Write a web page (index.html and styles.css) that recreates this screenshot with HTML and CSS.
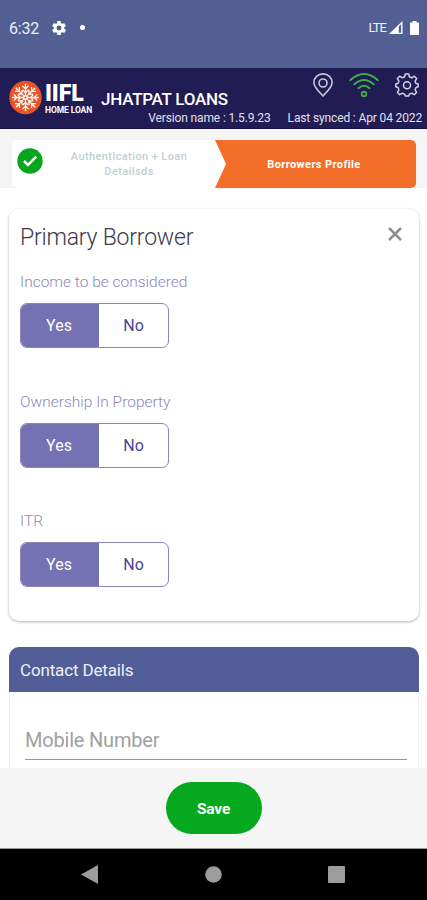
FILE: index.html
```html
<!DOCTYPE html>
<html lang="en">
<head>
<meta charset="utf-8">
<meta name="viewport" content="width=device-width, initial-scale=1">
<title>Jhatpat Loans</title>
<link rel="stylesheet" href="styles.css">
</head>
<body>
<div class="status">
  <span class="clock">6:32</span>
  <svg class="status-gear" width="14" height="16" viewBox="2 2 20 20"><path fill="#fff" d="M19.4 13a7.800 7.800 0 0 0 0-2l2.100-1.600a.5.5 0 0 0 .1-.7l-2-3.400a.5.5 0 0 0-.6-.2l-2.500 1a7.300 7.300 0 0 0-1.700-1l-.4-2.700a.5.5 0 0 0-.5-.4h-4a.5.5 0 0 0-.5.4L9.200 5.100a7.300 7.300 0 0 0-1.700 1L5 5.100a.5.500 0 0 0-.6.2l-2 3.400a.5.500 0 0 0 .1.7L4.600 11a7.800 7.800 0 0 0 0 2l-2.100 1.600a.5.500 0 0 0-.1.700l2 3.400c.1.200.4.300.6.200l2.500-1a7.300 7.300 0 0 0 1.700 1l.4 2.700c0 .2.200.4.500.4h4c.3 0 .5-.2.5-.4l.4-2.700a7.300 7.300 0 0 0 1.700-1l2.500 1c.2.100.5 0 .6-.2l2-3.400a.5.500 0 0 0-.1-.7zM12 15.500a3.500 3.500 0 1 1 0-7 3.500 3.500 0 0 1 0 7z"/></svg>
  <i class="dot"></i>
  <span class="lte">LTE</span>
  <svg class="signal" width="14" height="13" viewBox="0 0 15 14"><path fill="#fff" fill-rule="evenodd" d="M0 14 14.500 0V14zM10.500 5.800V12.600H13V3.500z"/></svg>
  <svg width="9" height="14" viewBox="0 0 9 14"><path fill="#fff" d="M2.500 0h4v1.500H8.200q.8 0 .8.800v10.900q0 .8-.8.800H.8q-.8 0-.8-.8V2.300q0-.8.8-.8h1.700z"/></svg>
</div>

<header class="header">
  <div class="logo">
    <svg width="33" height="35" viewBox="-17 -17.500 34 35">
      <defs><g id="spoke" fill="none" stroke="#fff" stroke-width="1.300"><path d="M0-2V-13M-3.200-12 0-9 3.200-12M-3-8 0-5 3-8"/><circle cx="0" cy="-13.200" r=".9" fill="#fff" stroke="none"/></g></defs>
      <ellipse rx="16.700" ry="17.300" fill="#ea5325"/>
      <use href="#spoke"/><use href="#spoke" transform="rotate(45)"/><use href="#spoke" transform="rotate(90)"/><use href="#spoke" transform="rotate(135)"/><use href="#spoke" transform="rotate(180)"/><use href="#spoke" transform="rotate(225)"/><use href="#spoke" transform="rotate(270)"/><use href="#spoke" transform="rotate(315)"/>
      <circle r="2.600" fill="#fff"/><circle r="1.100" fill="#ea5325"/>
    </svg>
    <div class="wordmark"><b>IIFL</b><span>HOME LOAN</span></div>
  </div>
  <div class="header-main">
    <div class="header-top">
      <h1>JHATPAT LOANS</h1>
      <div class="header-icons">
        <svg width="20" height="24" viewBox="0 0 20 24" fill="none" stroke="#c9c8dc" stroke-width="1.600"><path d="M10 23C7 19.500.9 14.500.9 9.500a9.100 8.600 0 0 1 18.200 0C19.100 14.500 13 19.500 10 23z"/><circle cx="10" cy="10" r="4"/></svg>
        <svg width="30" height="25" viewBox="0 0 30 25" fill="none" stroke="#3fae49" stroke-width="1.900" stroke-linecap="round"><path d="M1.200 7.200Q15-5.200 28.800 7.200M5.300 11.300Q15 2.800 24.700 11.300M9.400 15.300Q15 10.400 20.600 15.300"/><circle cx="15" cy="21" r="2.300"/></svg>
        <svg width="24" height="24" viewBox="0 0 24 24" fill="none" stroke="#d3d2e2" stroke-width="1.500" stroke-linejoin="round"><path d="M10.300.9h3.400l.7 2.900 2.300 1 2.600-1.600 2.300 2.400-1.500 2.500.9 2.300 2.200.6v2.800l-2.200.7-.9 2.300 1.500 2.500-2.300 2.400-2.600-1.500-2.300.9-.7 2h-3.400l-.7-2-2.300-.9-2.600 1.500-2.300-2.400 1.500-2.500-.9-2.300-2.200-.7V11l2.200-.6.900-2.300-1.500-2.500 2.300-2.400 2.600 1.600 2.300-1z"/><circle cx="12" cy="12.200" r="3.500"/></svg>
      </div>
    </div>
    <div class="meta"><span class="version">Version name : 1.5.9.23</span><span class="synced">Last synced : Apr 04 2022</span></div>
  </div>
</header>

<nav class="steps">
  <div class="steps-bar">
    <div class="step done">
      <svg width="26" height="26" viewBox="0 0 26 26"><circle cx="13" cy="13" r="12.700" fill="#06a51d"/><path d="m7 13 4 4 8.200-8.300" fill="none" stroke="#fff" stroke-width="2.500"/></svg>
      <span>Authentication + Loan<br>Detailsds</span>
    </div>
    <div class="step current"><span>Borrowers Profile</span></div>
  </div>
</nav>

<main class="content">
  <section class="card">
    <div class="card-head">
      <h2>Primary Borrower</h2>
      <svg width="14" height="14" viewBox="0 0 14 14"><path d="m1 1 12 12M13 1 1 13" stroke="#8e8e8e" stroke-width="2.500"/></svg>
    </div>
    <div class="field"><label>Income to be considered</label><div class="toggle"><span class="on">Yes</span><span>No</span></div></div>
    <div class="field"><label>Ownership In Property</label><div class="toggle"><span class="on">Yes</span><span>No</span></div></div>
    <div class="field"><label>ITR</label><div class="toggle"><span class="on">Yes</span><span>No</span></div></div>
  </section>
  <section class="contact">
    <h3>Contact Details</h3>
    <div class="input">Mobile Number</div>
  </section>
</main>

<footer class="actions"><button class="save">Save</button></footer>
<div class="android">
  <svg width="17" height="19" viewBox="0 0 17 19"><path d="M0 9.500 17 0v19z" fill="#9c9c9c"/></svg>
  <svg width="17" height="17" viewBox="0 0 17 17"><circle cx="8.500" cy="8.500" r="8.300" fill="#9c9c9c"/></svg>
  <svg width="17" height="17" viewBox="0 0 17 17"><rect width="17" height="17" rx="1" fill="#9c9c9c"/></svg>
</div>
</body>
</html>
```
FILE: styles.css
```css
* { box-sizing: border-box; }
body {
  margin: 0;
  height: 900px;
  overflow: hidden;
  display: flex;
  flex-direction: column;
  background: #fff;
  font-family: Roboto, "Liberation Sans", sans-serif;
}
svg { display: block; flex: none; }
h1, h2, h3 { margin: 0; }

.status {
  flex: none;
  height: 68px;
  padding: 0 8px 13px 9px;
  display: flex;
  align-items: center;
  background: #515f93;
  color: #eef0f7;
}
.clock { font-size: 16px; width: 43px; letter-spacing: -.2px; padding-top: 1px; }
.dot { width: 5px; height: 5px; border-radius: 50%; background: #fff; margin-left: 14px; }
.lte { margin-left: auto; font-size: 13px; letter-spacing: -1px; }
.signal { margin: 0 7px 0 3px; }

.header {
  flex: none;
  height: 61px;
  display: flex;
  padding-left: 9px;
  background: #221c54;
  border-bottom: 1px solid #17124a;
  color: #fff;
}
.logo { display: flex; width: 92px; padding-top: 12px; }
.wordmark { width: 50px; margin-left: 3px; }
.wordmark b { display: block; padding-top: 3px; font-size: 23px; font-weight: 900; line-height: 22px; letter-spacing: -.1px; }
.wordmark span { display: block; font-size: 8.500px; font-weight: 700; line-height: 11px; letter-spacing: -.1px; white-space: nowrap; }
.header-main { flex: 1; padding-right: 5px; }
.header-top { display: flex; height: 43px; justify-content: space-between; }
.header h1 { font-size: 17px; font-weight: 500; line-height: 20px; margin-top: 21px; letter-spacing: -.25px; white-space: nowrap; }
.header-icons { display: flex; gap: 16px; padding-top: 5px; margin-right: 3px; }
.meta { display: flex; justify-content: flex-end; gap: 17px; font-size: 12px; line-height: 15px; letter-spacing: -.14px; color: #e1e0ec; white-space: nowrap; }

.steps { flex: none; height: 59px; padding: 11px 11px 0 12px; background: #f5f5f5; }
.steps-bar { display: flex; height: 48px; background: #fff; border-radius: 5px; overflow: hidden; }
.step { display: flex; align-items: center; font-size: 11px; line-height: 15px; font-weight: 500; text-align: center; letter-spacing: .4px; }
.done { width: 203px; padding: 0 17px 0 5px; color: #bfd2d2; justify-content: space-between; }
.done svg { margin-bottom: 7px; }
.done span { width: 138px; white-space: nowrap; }
.current { flex: 1; justify-content: center; padding-right: 3px; background: #f36e28; color: #fff; font-weight: 700; clip-path: polygon(0 0, 100% 0, 100% 100%, 0 100%, 11px 50%); }

.content { flex: none; height: 580px; padding: 21px 8px 0 9px; overflow: hidden; }
.card { height: 412px; padding: 17px 11px 16px; border-radius: 10px; background: #fff; box-shadow: 0 1px 3px rgba(0, 0, 0, .3); }
.card-head { display: flex; justify-content: space-between; height: 47px; padding-right: 6px; }
.card-head h2 { font-size: 23px; font-weight: 300; line-height: 24px; letter-spacing: -.2px; color: #3c3a4a; }
.card-head svg { margin-top: 1px; }
.field { height: 119.500px; }
.field label { display: block; height: 30px; font-size: 15.500px; font-weight: 300; line-height: 18px; color: #8d88b8; }
.toggle { display: flex; width: 149px; height: 45px; border: 1px solid #8a86bb; border-radius: 7px; overflow: hidden; font-size: 16px; line-height: 20px; }
.toggle span { flex: 1; display: flex; align-items: center; justify-content: center; padding-top: 1px; color: #4b4392; }
.toggle .on { flex: none; width: 78px; padding-right: 2px; background: #7571b3; color: #fff; }

.contact { margin-top: 26px; height: 200px; border-radius: 10px; overflow: hidden; background: #fff; box-shadow: inset 0 0 0 1px #eee; }
.contact h3 { height: 45px; padding-left: 11px; background: #505d96; color: #edf0f9; font-size: 17px; font-weight: 400; line-height: 47px; letter-spacing: -.15px; }
.input { margin: 31px 12px 0 16px; height: 37px; border-bottom: 1px solid #999; font-size: 20px; line-height: 34px; letter-spacing: -.2px; color: #a0a0a0; }

.actions { flex: none; height: 81px; display: flex; justify-content: center; align-items: center; background: #f5f5f5; border-bottom: 1px solid #999; }
.save { width: 96px; height: 52px; padding: 1px 0 0; border: 0; border-radius: 26px; background: #04a91d; color: #fff; font: 700 15.500px Roboto, sans-serif; letter-spacing: -.15px; }
.android { flex: none; height: 51px; background: #000; display: flex; align-items: center; justify-content: space-between; padding: 0 82px 1px 81px; }
```
